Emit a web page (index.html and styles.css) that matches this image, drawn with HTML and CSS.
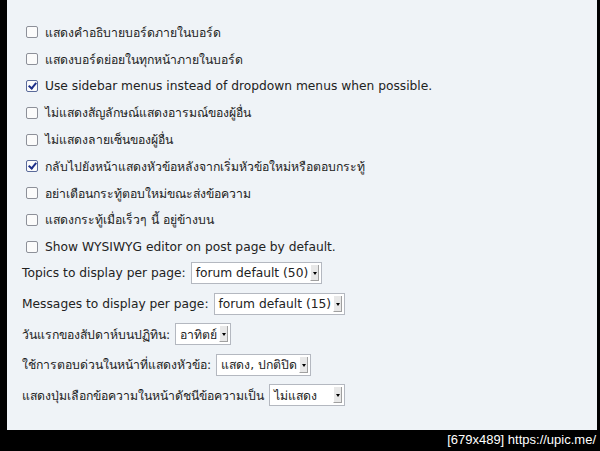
FILE: index.html
```html
<!DOCTYPE html>
<html lang="th">
<head>
    <meta charset="UTF-8">
    <title>Board preferences</title>
    <link rel="stylesheet" href="styles.css">
</head>
<body>
    <div class="panel">
        <ul class="options">
            <li><span class="box"></span>แสดงคำอธิบายบอร์ดภายในบอร์ด</li>
            <li><span class="box"></span>แสดงบอร์ดย่อยในทุกหน้าภายในบอร์ด</li>
            <li><span class="box checked"></span>Use sidebar menus instead of dropdown menus when possible.</li>
            <li><span class="box"></span>ไม่แสดงสัญลักษณ์แสดงอารมณ์ของผู้อื่น</li>
            <li><span class="box"></span>ไม่แสดงลายเซ็นของผู้อื่น</li>
            <li><span class="box checked"></span>กลับไปยังหน้าแสดงหัวข้อหลังจากเริ่มหัวข้อใหม่หรือตอบกระทู้</li>
            <li><span class="box"></span>อย่าเตือนกระทู้ตอบใหม่ขณะส่งข้อความ</li>
            <li><span class="box"></span>แสดงกระทู้เมื่อเร็วๆ นี้ อยู่ข้างบน</li>
            <li><span class="box"></span>Show WYSIWYG editor on post page by default.</li>
        </ul>
        <div class="settings">
            <div class="setting">Topics to display per page: <span class="dropdown"><span class="value">forum default (50)</span><span class="arrow"></span></span></div>
            <div class="setting">Messages to display per page: <span class="dropdown"><span class="value">forum default (15)</span><span class="arrow"></span></span></div>
            <div class="setting">วันแรกของสัปดาห์บนปฏิทิน: <span class="dropdown"><span class="value">อาทิตย์</span><span class="arrow"></span></span></div>
            <div class="setting">ใช้การตอบด่วนในหน้าที่แสดงหัวข้อ: <span class="dropdown"><span class="value">แสดง, ปกติปิด</span><span class="arrow"></span></span></div>
            <div class="setting">แสดงปุ่มเลือกข้อความในหน้าดัชนีข้อความเป็น <span class="dropdown"><span class="value wide">ไม่แสดง</span><span class="arrow"></span></span></div>
        </div>
    </div>
    <div class="footer">[679x489] https://upic.me/</div>
</body>
</html>
```

FILE: styles.css
```css
body {
    margin: 0;
    background-color: #000;
    font-family: "DejaVu Sans", Verdana, sans-serif;
    font-size: 12.25px;
    color: #222;
}

.panel {
    margin-left: 7px;
    width: 590px;
    height: 430px;
    box-sizing: border-box;
    background-color: #eff3f7;
    padding: 19px 0 0 15px;
}

.options {
    list-style: none;
    margin: 0;
    padding: 0 0 0 4px;
}

.options li {
    display: flex;
    align-items: center;
    height: 26.8px;
}

.box {
    width: 10px;
    height: 10px;
    border: 1px solid #8d9099;
    border-radius: 2px;
    background-color: #fbfbfb;
    margin-right: 7px;
    position: relative;
}

.box.checked {
    border-color: #5a6a9a;
}

.box.checked::after {
    content: "";
    position: absolute;
    left: 3px;
    top: 0;
    width: 3px;
    height: 6px;
    border: solid #1c2f8a;
    border-width: 0 2px 2px 0;
    transform: rotate(40deg);
}

.settings {
    margin-top: -2px;
}

.setting {
    display: flex;
    align-items: center;
    height: 30.5px;
}

.dropdown {
    display: inline-flex;
    align-items: center;
    height: 22px;
    box-sizing: border-box;
    border: 1px solid #b4b8c0;
    background-color: #fff;
    margin-left: 5px;
    padding: 0 2px 0 4px;
}

.value {
    padding-right: 2px;
}

.value.wide {
    padding-right: 16px;
}

.arrow {
    width: 9px;
    height: 16px;
    background-color: #e8e8e8;
    border-left: 1px solid #fff;
    border-right: 1px solid #a0a0a0;
    border-bottom: 1px solid #a0a0a0;
    box-sizing: border-box;
    position: relative;
}

.arrow::after {
    content: "";
    position: absolute;
    left: 2px;
    top: 7px;
    border-left: 2px solid transparent;
    border-right: 2px solid transparent;
    border-top: 3px solid #000;
}

.footer {
    color: #fff;
    font-family: "Liberation Sans", sans-serif;
    font-size: 13px;
    text-align: right;
    padding: 2px 4px 0 0;
}
```
